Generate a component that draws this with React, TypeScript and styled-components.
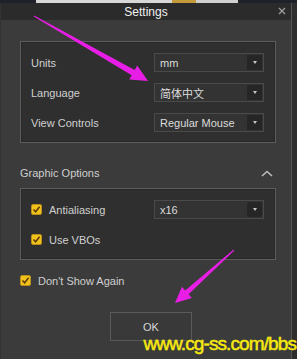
import React from 'react';
import styled, { createGlobalStyle } from 'styled-components';

const GlobalStyle = createGlobalStyle`
	html, body {
		margin: 0;
		padding: 0;
		background: #1e2228;
	}
	* {
		box-sizing: border-box;
	}
`;

const Page = styled.div`
	position: relative;
	width: 297px;
	height: 359px;
	overflow: hidden;
	background: #2e2e2e;
	font-family: 'Liberation Sans', Arial, sans-serif;
`;

const TopStrip = styled.div`
	height: 3px;
	background: linear-gradient(
		90deg,
		#1e2228 0 12%,
		#d8d8d8 12% 58%,
		#c59a3a 58% 66%,
		#d0d0d0 66% 80%,
		#1e2228 80%
	);
`;

const Window = styled.div`
	width: 292px;
	height: 356px;
	display: flex;
	flex-direction: column;
	border-left: 1px solid #333;
	border-right: 1px solid #555;
`;

const TitleBar = styled.div`
	height: 17px;
	flex: none;
	display: flex;
	align-items: center;
	justify-content: center;
	position: relative;
	background: #2b2b2b;
	color: #f0f0f0;
	font-size: 12px;
`;

const CloseButton = styled.span`
	position: absolute;
	right: 5px;
	top: 4px;
	width: 8px;
	height: 8px;
	display: flex;
`;

const Body = styled.div`
	flex: 1;
	display: flex;
	flex-direction: column;
	background: #3b3b3b;
	padding: 21px 15px 0 19px;
`;

const Group = styled.div`
	display: grid;
	grid-template-columns: 1fr 110px;
	grid-auto-rows: 19px;
	row-gap: 11px;
	align-items: center;
	padding: 11px 11px 10px 10px;
	background: #2f2f2f;
	border: 1px solid #5c5c5c;
	box-shadow: inset 0 0 0 1px #282828;
`;

const Label = styled.span`
	color: #cfcfcf;
	font-size: 11px;
`;

const Select = styled.div`
	height: 19px;
	display: flex;
	align-items: center;
	justify-content: space-between;
	padding: 0 1px 0 5px;
	background: #333;
	border: 1px solid #4a4a4a;
	color: #dcdcdc;
	font-size: 11px;
	font-family: 'Liberation Sans', 'Noto Sans CJK SC', sans-serif;
`;

const SelectArrow = styled.span<{ $round?: boolean }>`
	width: 15px;
	height: 15px;
	display: flex;
	align-items: center;
	justify-content: center;
	background: #262626;
	border-radius: ${(p) => (p.$round ? '3px' : '0')};
	&::after {
		content: '';
		border-left: 2.5px solid transparent;
		border-right: 2.5px solid transparent;
		border-top: 3px solid #c8c8c8;
	}
`;

const SectionHeader = styled.div`
	height: 20px;
	margin-top: 20px;
	margin-bottom: 5px;
	display: flex;
	align-items: center;
	justify-content: space-between;
	padding-right: 2px;
`;

const OptionRow = styled.div`
	height: 19px;
	margin-top: 11px;
	display: flex;
	align-items: center;
`;

const CheckItem = styled.label`
	display: flex;
	align-items: center;
	gap: 7px;
	color: #cfcfcf;
	font-size: 11px;
`;

const Box = styled.span`
	width: 11px;
	height: 11px;
	display: flex;
	align-items: center;
	justify-content: center;
	background: #f2c21c;
	border: 1px solid #b8901a;
	border-radius: 2px;
`;

const Footer = styled.div`
	display: flex;
	justify-content: center;
	padding-left: 6px;
	margin-top: 22px;
`;

const Button = styled.button`
	width: 82px;
	height: 29px;
	background: #393939;
	border: 1px solid #5a5a5a;
	color: #d8d8d8;
	font-family: 'Liberation Sans', Arial, sans-serif;
	font-size: 11px;
`;

const Overlay = styled.svg`
	position: absolute;
	left: 0;
	top: 0;
	pointer-events: none;
`;

const Watermark = styled.div`
	position: absolute;
	right: 1px;
	bottom: 4px;
	color: #f6ea10;
	font-family: 'Liberation Sans', Arial, sans-serif;
	font-size: 19px;
	letter-spacing: -0.9px;
	-webkit-text-stroke: 0.5px #f6ea10;
`;

// tapered arrow polygon, tail -> tip
const arrow = (
	tx: number,
	ty: number,
	px: number,
	py: number,
	tailW: number,
	shaftW: number,
	headW: number,
	headL: number
) => {
	const dx = px - tx;
	const dy = py - ty;
	const len = Math.hypot(dx, dy);
	const ux = dx / len;
	const uy = dy / len;
	const nx = -uy;
	const ny = ux;
	const bx = px - ux * headL;
	const by = py - uy * headL;
	const pts = [
		[tx + (nx * tailW) / 2, ty + (ny * tailW) / 2],
		[bx + (nx * shaftW) / 2, by + (ny * shaftW) / 2],
		[bx + (nx * headW) / 2, by + (ny * headW) / 2],
		[px, py],
		[bx - (nx * headW) / 2, by - (ny * headW) / 2],
		[bx - (nx * shaftW) / 2, by - (ny * shaftW) / 2],
		[tx - (nx * tailW) / 2, ty - (ny * tailW) / 2],
	];
	return pts.map((p) => p.map((v) => v.toFixed(1)).join(',')).join(' ');
};

const Check = () => (
	<svg width='9' height='9' viewBox='0 0 9 9'>
		<path d='M1.5 4.5 L3.6 6.8 L7.6 1.8' fill='none' stroke='#5a3a08' strokeWidth='1.5' />
	</svg>
);

const Checkbox = ({ label }: { label: string }) => (
	<CheckItem>
		<Box>
			<Check />
		</Box>
		{label}
	</CheckItem>
);

const Dropdown = ({ value, round }: { value: string; round?: boolean }) => (
	<Select>
		{value}
		<SelectArrow $round={round} />
	</Select>
);

export default function App() {
	return (
		<Page>
			<GlobalStyle />
			<TopStrip />
			<Window>
				<TitleBar>
					Settings
					<CloseButton>
						<svg width='8' height='8' viewBox='0 0 8 8'>
							<path d='M1 1 L7 7 M7 1 L1 7' stroke='#9a9a9a' strokeWidth='1.4' />
						</svg>
					</CloseButton>
				</TitleBar>
				<Body>
					<Group>
						<Label>Units</Label>
						<Dropdown value='mm' />
						<Label>Language</Label>
						<Dropdown value='简体中文' />
						<Label>View Controls</Label>
						<Dropdown value='Regular Mouse' />
					</Group>

					<SectionHeader>
						<Label>Graphic Options</Label>
						<svg width='14' height='9' viewBox='0 0 14 9'>
							<path d='M2 7 L7 2.5 L12 7' fill='none' stroke='#bdbdbd' strokeWidth='1.6' />
						</svg>
					</SectionHeader>

					<Group>
						<Checkbox label='Antialiasing' />
						<Dropdown value='x16' round />
						<Checkbox label='Use VBOs' />
					</Group>

					<OptionRow>
						<Checkbox label="Don't Show Again" />
					</OptionRow>

					<Footer>
						<Button>OK</Button>
					</Footer>
				</Body>
			</Window>

			<Overlay width='297' height='359'>
				<polygon points={arrow(34, 16, 148, 81, 1, 6, 16, 17)} fill='#e81ee6' />
				<polygon points={arrow(234, 250, 175, 303, 1, 5, 15, 16)} fill='#e81ee6' />
			</Overlay>
			<Watermark>www.cg-ss.com/bbs</Watermark>
		</Page>
	);
}
